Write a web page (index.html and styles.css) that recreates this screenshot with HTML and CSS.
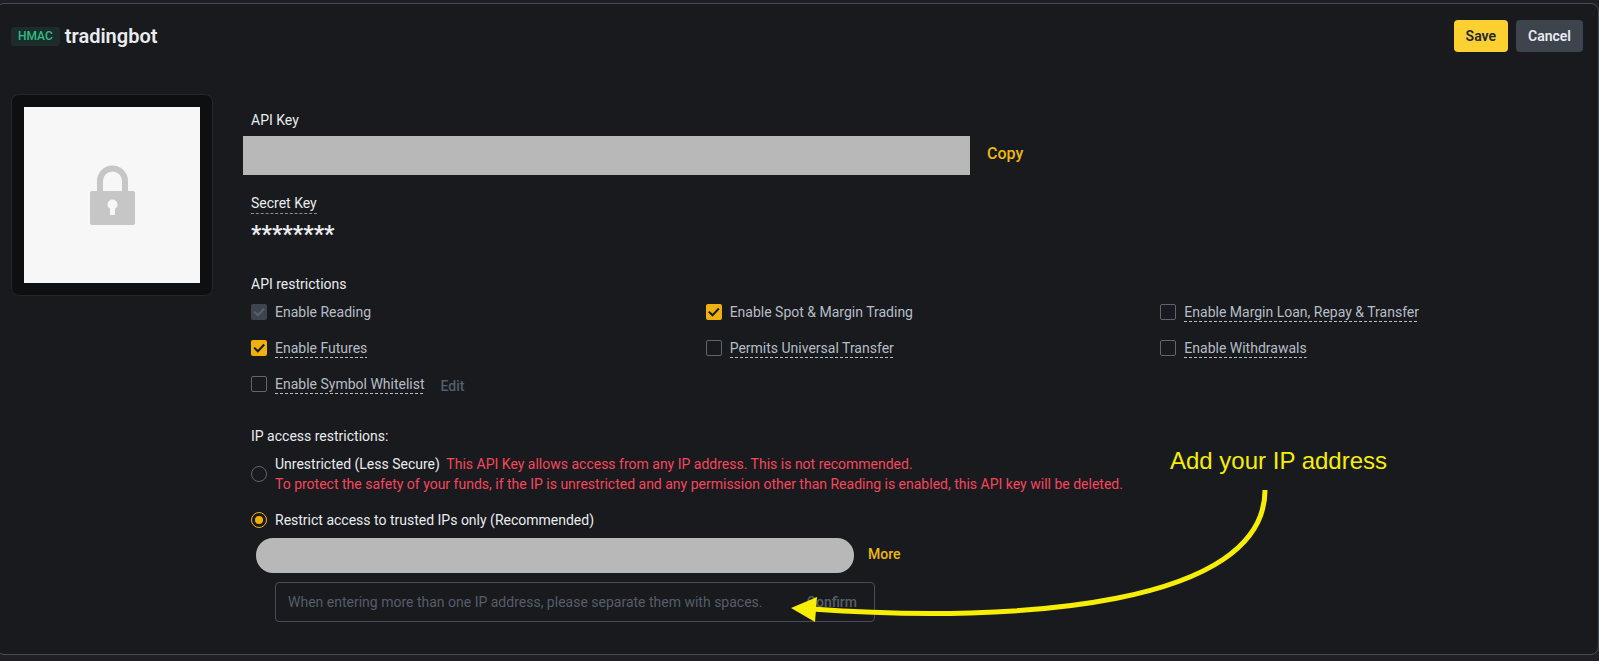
FILE: index.html
```html
<!DOCTYPE html>
<html lang="en">
<head>
<meta charset="utf-8">
<title>API Management</title>
<link rel="stylesheet" href="styles.css">
</head>
<body>
<form class="card">
  <header class="card-header">
    <div class="heading">
      <span class="badge">HMAC</span>
      <h1 class="title">tradingbot</h1>
    </div>
    <div class="actions">
      <button type="button" class="btn btn-primary">Save</button>
      <button type="button" class="btn btn-secondary">Cancel</button>
    </div>
  </header>

  <div class="card-body">
    <div class="qr-frame">
      <div class="qr">
        <svg width="46" height="60" viewBox="0 0 46 60" role="img" aria-label="Locked">
          <path d="M11 28V16a12.500 12.500 0 0 1 25 0v12" fill="none" stroke="#c6c6c6" stroke-width="6"/>
          <rect x="1" y="26" width="45" height="34" rx="2" fill="#c6c6c6"/>
          <circle cx="23.500" cy="39.500" r="5" fill="#f7f7f7"/>
          <path d="M21 40h5v10h-5z" fill="#f7f7f7"/>
        </svg>
      </div>
    </div>

    <div class="details">
      <section class="keys">
        <h2 class="label">API Key</h2>
        <div class="key-row">
          <div class="masked-key"></div>
          <button type="button" class="link link-large">Copy</button>
        </div>
        <h2 class="label"><span class="dashed">Secret Key</span></h2>
        <p class="secret">********</p>
      </section>

      <section class="restrictions">
        <h2 class="label">API restrictions</h2>
        <div class="permissions">
          <label class="option"><input type="checkbox" class="check" checked disabled><span>Enable Reading</span></label>
          <label class="option"><input type="checkbox" class="check" checked><span>Enable Spot &amp; Margin Trading</span></label>
          <label class="option"><input type="checkbox" class="check"><span class="hint">Enable Margin Loan, Repay &amp; Transfer</span></label>
          <label class="option"><input type="checkbox" class="check" checked><span class="hint">Enable Futures</span></label>
          <label class="option"><input type="checkbox" class="check"><span class="hint">Permits Universal Transfer</span></label>
          <label class="option"><input type="checkbox" class="check"><span class="hint">Enable Withdrawals</span></label>
          <div class="whitelist">
            <label class="option"><input type="checkbox" class="check"><span class="hint">Enable Symbol Whitelist</span></label>
            <button type="button" class="edit" disabled>Edit</button>
          </div>
        </div>
      </section>

      <section class="ip-access">
        <h2 class="label">IP access restrictions:</h2>
        <label class="ip-option">
          <input type="radio" name="ip" class="radio">
          <span>Unrestricted (Less Secure) <span class="warning warning-lead">This API Key allows access from any IP address. This is not recommended.</span><br>
          <span class="warning">To protect the safety of your funds, if the IP is unrestricted and any permission other than Reading is enabled, this API key will be deleted.</span></span>
        </label>
        <label class="ip-option">
          <input type="radio" name="ip" class="radio" checked>
          <span>Restrict access to trusted IPs only (Recommended)</span>
        </label>
        <div class="ip-row">
          <div class="masked-ip"></div>
          <button type="button" class="link">More</button>
        </div>
        <div class="ip-field">
          <input type="text" class="ip-input" aria-label="IP addresses" placeholder="When entering more than one IP address, please separate them with spaces.">
          <button type="button" class="confirm" disabled>Confirm</button>
        </div>
      </section>
    </div>
  </div>

  <div class="callout">
    <p class="callout-text">Add your IP address</p>
    <svg class="callout-arrow" width="480" height="136" viewBox="790 489 480 136" aria-hidden="true">
      <path d="M1265 490C1265 605 1020 624 812 609" fill="none" stroke="#f7ee00" stroke-width="5"/>
      <path d="M791 608L817 597L815 622Z" fill="#f7ee00"/>
    </svg>
  </div>
</form>
</body>
</html>
```
FILE: styles.css
```css
* {
  box-sizing: border-box;
}

body {
  margin: 0;
  padding: 3px 0 6px;
  background: #1e2026;
  color: #eaecef;
  font: 14px/20px Roboto, "Liberation Sans", sans-serif;
  overflow-x: hidden;
}

h1, h2, p {
  margin: 0;
}

button, input {
  font: inherit;
}

button {
  border: 0;
  padding: 0;
  background: none;
}

.card {
  position: relative;
  margin: 0 0 0 -4px;
  padding: 16px 15px 32px 14px;
  border: 1px solid #474d57;
  border-radius: 8px;
  background: #181a1d;
}

.card-header {
  display: flex;
  align-items: center;
  justify-content: space-between;
  height: 32px;
}

.heading {
  display: flex;
  align-items: center;
  gap: 5px;
}

.badge {
  padding: 0 7px;
  border-radius: 3px;
  background: #1b2c2a;
  color: #2ebd85;
  font-size: 12px;
  font-weight: 500;
  line-height: 19px;
}

.title {
  font-size: 20px;
  font-weight: 600;
  line-height: 28px;
}

.actions {
  display: flex;
  gap: 8px;
}

.btn {
  height: 32px;
  padding: 0 12px;
  border-radius: 4px;
  font-weight: 600;
}

.btn-primary {
  background: #fcd030;
  color: #202630;
}

.btn-secondary {
  background: #3e444e;
  color: #eaecef;
}

.card-body {
  display: flex;
  align-items: flex-start;
  gap: 38px;
  margin-top: 42px;
}

.qr-frame {
  flex: none;
  padding: 12px;
  border: 1px solid #25272b;
  border-radius: 8px;
  background: #0e0f11;
}

.qr {
  display: flex;
  align-items: center;
  justify-content: center;
  width: 176px;
  height: 176px;
  background: #f7f7f7;
}

.details {
  flex: 1;
  min-width: 0;
  padding-top: 16px;
}

.label {
  font-size: 14px;
  font-weight: 400;
  line-height: 20px;
}

.key-row {
  display: flex;
  align-items: center;
  gap: 17px;
  margin: 6px 0 18px -8px;
}

.masked-key {
  flex: 0 1 727px;
  height: 39px;
  background: #b8b8b8;
}

.link {
  padding-bottom: 4px;
  color: #f0b90b;
  font-weight: 500;
}

.link-large {
  font-size: 16px;
}

.dashed {
  padding-bottom: 2px;
  border-bottom: 1px dashed #848e9c;
}

.secret {
  margin-top: 12px;
  font-size: 23px;
  font-weight: 700;
}

.restrictions {
  margin-top: 29px;
}

.permissions {
  display: grid;
  grid-template-columns: repeat(3, 1fr);
  gap: 16px 32px;
  margin-top: 8px;
  color: #b7bdc6;
}

.option, .whitelist {
  display: flex;
  align-items: center;
}

.option {
  gap: 8px;
}

.whitelist {
  gap: 16px;
}

.hint {
  background: repeating-linear-gradient(90deg, #b7bdc6 0 3px, transparent 3px 5px) bottom / 100% 1px no-repeat;
}

.edit {
  padding-top: 4px;
  color: #565d69;
  font-weight: 500;
  line-height: 16px;
}

.check, .radio {
  appearance: none;
  display: grid;
  flex: none;
  width: 16px;
  height: 16px;
  margin: 0;
  border: 1px solid #5e6673;
}

.check {
  border-radius: 2px;
}

.check:checked {
  border: 0;
  background: #f0b10b;
}

.check:checked:disabled {
  background: #3e444e;
}

.check:checked::after {
  content: "";
  background: #181a1d;
  clip-path: polygon(15% 52%, 24% 43%, 43% 61%, 78% 24%, 87% 33%, 43% 79%);
}

.check:checked:disabled::after {
  background: #5a616c;
}

.radio {
  place-items: center;
  border-radius: 50%;
}

.radio:checked {
  border-color: #f0b10b;
}

.radio:checked::after {
  content: "";
  width: 8px;
  height: 8px;
  border-radius: 50%;
  background: #f0b10b;
}

.ip-access {
  margin-top: 32px;
}

.ip-option {
  display: flex;
  align-items: center;
  gap: 8px;
  width: fit-content;
}

.ip-option:first-of-type {
  margin: 8px 0 16px;
}

.warning {
  color: #f6465d;
}

.warning-lead {
  margin-left: 3px;
}

.ip-row {
  display: flex;
  align-items: center;
  gap: 14px;
  margin: 8px 0 9px 5px;
}

.masked-ip {
  flex: 0 1 598px;
  height: 35px;
  border-radius: 17px;
  background: #b8b8b8;
}

.ip-field {
  display: flex;
  align-items: center;
  max-width: 600px;
  height: 40px;
  margin-left: 24px;
  padding: 0 17px 0 12px;
  border: 1px solid #474d57;
  border-radius: 4px;
}

.ip-input {
  flex: 1;
  min-width: 0;
  padding: 0;
  border: 0;
  outline: 0;
  background: none;
  color: #eaecef;
}

.ip-input::placeholder {
  color: #565d69;
  opacity: 1;
}

.confirm {
  color: #565d69;
  font-weight: 500;
}

.callout {
  position: absolute;
  left: 793px;
  top: 443px;
  color: #f7ee00;
  pointer-events: none;
}

.callout-text {
  margin-left: 380px;
  font: 24px/28px "Liberation Sans", Arial, sans-serif;
}

.callout-arrow {
  display: block;
  margin-top: 14px;
}
```
